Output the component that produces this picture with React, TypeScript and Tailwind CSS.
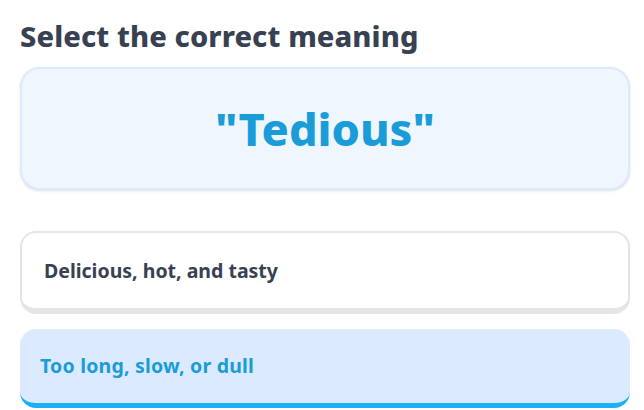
export default function App() {
  return (
    <div className="bg-white w-[644px] h-[410px] overflow-hidden" style={{ fontFamily: "'Noto Sans', sans-serif" }}>
      <div className="ml-5 w-[610px] pt-[18px]">
        <h1 className="text-[29px] leading-[36px] font-extrabold text-[#374151] tracking-[0.1px]">Select the correct meaning</h1>
        <div className="mt-[13px] h-[123px] rounded-[20px] border-2 border-[#dbeafe] bg-[#eff6ff] shadow-sm flex items-center justify-center">
          <span className="text-[45px] font-extrabold text-[#1a9cd8]">"Tedious"</span>
        </div>
        <div className="mt-[41px] flex flex-col gap-[15px]">
          <div className="h-[83px] rounded-2xl border-2 border-b-[6px] border-[#e5e5e5] bg-white px-[22px] flex items-center">
            <span className="text-[19.5px] font-bold text-[#374151]">Delicious, hot, and tasty</span>
          </div>
          <div className="h-[79px] rounded-2xl border-b-[5px] border-[#1cb0f6] bg-[#dbeafe] px-5 flex items-center">
            <span className="text-[19.5px] font-bold text-[#1a9cd8] tracking-[0.2px]">Too long, slow, or dull</span>
          </div>
        </div>
      </div>
    </div>
  );
}
